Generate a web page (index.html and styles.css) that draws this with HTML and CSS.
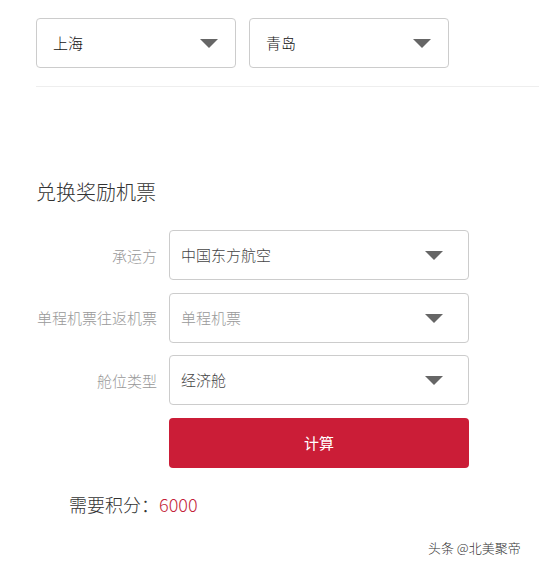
FILE: index.html
```html
<!DOCTYPE html>
<html lang="zh">
<head>
<meta charset="utf-8">
<link rel="stylesheet" href="styles.css">
</head>
<body>
<div class="page">
  <div class="city-row">
    <div class="select city"><span class="val">上海</span><span class="caret"></span></div>
    <div class="select city"><span class="val">青岛</span><span class="caret"></span></div>
  </div>
  <div class="divider"></div>
  <h2 class="title">兑换奖励机票</h2>
  <div class="form">
    <div class="row">
      <label class="lbl">承运方</label>
      <div class="select field"><span class="val">中国东方航空</span><span class="caret"></span></div>
    </div>
    <div class="row">
      <label class="lbl">单程机票往返机票</label>
      <div class="select field"><span class="val placeholder">单程机票</span><span class="caret"></span></div>
    </div>
    <div class="row">
      <label class="lbl">舱位类型</label>
      <div class="select field"><span class="val">经济舱</span><span class="caret"></span></div>
    </div>
    <div class="row">
      <span class="lbl"></span>
      <button class="btn">计算</button>
    </div>
  </div>
  <div class="result">需要积分：<span class="num">6000</span></div>
  <div class="mark">头条 @北美聚帝</div>
</div>
</body>
</html>
```
FILE: styles.css
```css
* { box-sizing: border-box; }
html, body { margin: 0; padding: 0; background: #fff; }
body {
  font-family: "Noto Sans CJK SC", "Microsoft YaHei", sans-serif;
  font-weight: 300;
  color: #333;
  width: 539px;
  height: 569px;
  overflow: hidden;
}
.page { padding: 18px 0 0 36px; }
.city-row { display: flex; gap: 13px; }
.select {
  display: flex;
  align-items: center;
  justify-content: space-between;
  border: 1px solid #ccc;
  border-radius: 4px;
  height: 50px;
  background: #fff;
}
.city { width: 200px; padding: 0 17px 2px 16px; }
.val { font-size: 15px; color: #111; }
.val.placeholder { color: #999; }
.caret {
  width: 0; height: 0;
  border-left: 9px solid transparent;
  border-right: 9px solid transparent;
  border-top: 9px solid #666;
  margin-top: 2px;
}
.divider { height: 1px; background: #eee; margin-top: 18px; }
.title {
  margin: 91px 0 0 0;
  font-size: 20px;
  font-weight: 300;
  line-height: 28px;
  color: #333;
}
.form { margin-top: 24px; display: flex; flex-direction: column; gap: 12.5px; }
.row { display: flex; align-items: center; gap: 12px; }
.lbl {
  width: 121px;
  text-align: right;
  font-size: 15px;
  color: #999;
  white-space: nowrap;
}
.field { width: 300px; padding: 0 25px 1px 11px; height: 50px; }
.field .val { font-size: 15px; color: #444; }
.field .val.placeholder { color: #999; }
.btn {
  width: 300px;
  height: 50px;
  border: none;
  border-radius: 4px;
  background: #cb1d37;
  color: #fff;
  font-family: inherit;
  font-weight: 400;
  font-size: 15px;
}
.result {
  margin: 22px 0 0 33px;
  font-size: 18px;
  color: #333;
  line-height: 28px;
}
.num { color: #c41f3b; }
.mark {
  margin: 20px 0 0 392px;
  font-size: 13px;
  color: #333;
}
```
